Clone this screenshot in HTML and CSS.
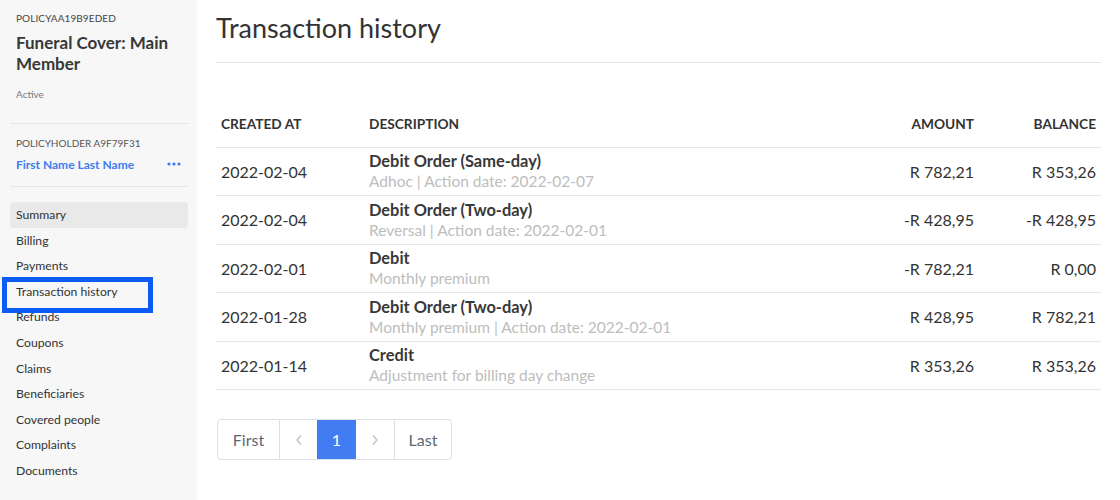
FILE: index.html
```html
<!DOCTYPE html>
<html>
<head>
<meta charset="utf-8">
<link rel="stylesheet" href="styles.css">
</head>
<body>
<div class="layout">
  <aside class="sidebar">
    <div class="policy-id">POLICYAA19B9EDED</div>
    <div class="policy-title">Funeral Cover: Main Member</div>
    <div class="policy-status">Active</div>
    <div class="divider first"></div>
    <div class="holder-label">POLICYHOLDER A9F79F31</div>
    <div class="holder-row">
      <span class="holder-name">First Name Last Name</span>
      <svg class="dots" width="14" height="4" viewBox="0 0 14 4"><circle cx="2" cy="2" r="1.6" fill="#3d7cf2"/><circle cx="7" cy="2" r="1.6" fill="#3d7cf2"/><circle cx="12" cy="2" r="1.6" fill="#3d7cf2"/></svg>
    </div>
    <div class="divider second"></div>
    <nav class="nav">
      <div class="nav-item selected">Summary</div>
      <div class="nav-item">Billing</div>
      <div class="nav-item">Payments</div>
      <div class="nav-item focused">Transaction history</div>
      <div class="nav-item">Refunds</div>
      <div class="nav-item">Coupons</div>
      <div class="nav-item">Claims</div>
      <div class="nav-item">Beneficiaries</div>
      <div class="nav-item">Covered people</div>
      <div class="nav-item">Complaints</div>
      <div class="nav-item">Documents</div>
    </nav>
  </aside>
  <main class="main">
    <h1 class="page-title">Transaction history</h1>
    <table class="tx-table">
      <thead>
        <tr>
          <th class="col-date">CREATED AT</th>
          <th class="col-desc">DESCRIPTION</th>
          <th class="col-amt num">AMOUNT</th>
          <th class="col-bal num">BALANCE</th>
        </tr>
      </thead>
      <tbody>
        <tr>
          <td>2022-02-04</td>
          <td><div class="d-title">Debit Order (Same-day)</div><div class="d-sub">Adhoc | Action date: 2022-02-07</div></td>
          <td class="num">R 782,21</td>
          <td class="num">R 353,26</td>
        </tr>
        <tr>
          <td>2022-02-04</td>
          <td><div class="d-title">Debit Order (Two-day)</div><div class="d-sub">Reversal | Action date: 2022-02-01</div></td>
          <td class="num">-R 428,95</td>
          <td class="num">-R 428,95</td>
        </tr>
        <tr>
          <td>2022-02-01</td>
          <td><div class="d-title">Debit</div><div class="d-sub">Monthly premium</div></td>
          <td class="num">-R 782,21</td>
          <td class="num">R 0,00</td>
        </tr>
        <tr>
          <td>2022-01-28</td>
          <td><div class="d-title">Debit Order (Two-day)</div><div class="d-sub">Monthly premium | Action date: 2022-02-01</div></td>
          <td class="num">R 428,95</td>
          <td class="num">R 782,21</td>
        </tr>
        <tr>
          <td>2022-01-14</td>
          <td><div class="d-title">Credit</div><div class="d-sub">Adjustment for billing day change</div></td>
          <td class="num">R 353,26</td>
          <td class="num">R 353,26</td>
        </tr>
      </tbody>
    </table>
    <div class="pager">
      <div class="pg pg-first">First</div>
      <div class="pg pg-arrow"><svg width="8" height="12" viewBox="0 0 8 12"><path d="M6 1.5 L2 6 L6 10.5" fill="none" stroke="#c4c7cc" stroke-width="1.6"/></svg></div>
      <div class="pg pg-active">1</div>
      <div class="pg pg-arrow"><svg width="8" height="12" viewBox="0 0 8 12"><path d="M2 1.5 L6 6 L2 10.5" fill="none" stroke="#c4c7cc" stroke-width="1.6"/></svg></div>
      <div class="pg pg-last">Last</div>
    </div>
  </main>
</div>
</body>
</html>
```
FILE: styles.css
```css
*, *::before, *::after { box-sizing: border-box; }
html, body { margin: 0; padding: 0; }
body {
  font-family: Lato, "Noto Sans", "Liberation Sans", sans-serif;
  color: #333;
  background: #fff;
}
.layout {
  display: flex;
  width: 1120px;
  height: 500px;
  overflow: hidden;
}
.sidebar {
  width: 197px;
  flex: none;
  background: #f7f7f7;
  padding: 10px 9px 0 10px;
}
.policy-id {
  font-size: 10px;
  line-height: 16px;
  color: #444;
  padding-left: 6px;
  letter-spacing: 0.1px;
}
.policy-title {
  margin-top: 6px;
  font-size: 17px;
  line-height: 21px;
  font-weight: 700;
  color: #383838;
  padding-left: 6px;
}
.policy-status {
  margin-top: 12px;
  font-size: 10px;
  line-height: 16px;
  color: #777;
  padding-left: 6px;
}
.divider {
  height: 1px;
  background: #e6e6e6;
}
.divider.first { margin-top: 21px; }
.holder-label {
  margin-top: 11px;
  font-size: 10px;
  line-height: 16px;
  color: #555;
  padding-left: 6px;
}
.holder-row {
  margin-top: 5px;
  display: flex;
  align-items: center;
  justify-content: space-between;
  padding-left: 6px;
  padding-right: 7px;
  height: 16px;
}
.holder-name {
  font-size: 12px;
  font-weight: 700;
  color: #3d7cf2;
}
.dots { display: block; }
.divider.second { margin-top: 14px; }
.nav { margin-top: 15px; }
.nav-item {
  height: 25.6px;
  line-height: 25.6px;
  font-size: 12.2px;
  color: #333;
  padding-left: 6px;
  border-radius: 4px;
}
.nav-item.selected { background: #e9e9e9; }
.nav-item.focused { position: relative; }
.nav-item.focused::before {
  content: "";
  position: absolute;
  left: -8px;
  top: -2px;
  width: 151px;
  height: 36px;
  border: 5px solid #0a5cf5;
  border-radius: 0;
}
.main {
  flex: 1;
  padding: 0 19px;
}
.page-title {
  margin: 0;
  padding-top: 11px;
  padding-bottom: 17px;
  font-size: 27px;
  line-height: 34px;
  font-weight: 400;
  color: #333;
  border-bottom: 1px solid #e3e3e3;
}
.tx-table {
  margin-top: 37px;
  width: 100%;
  border-collapse: collapse;
}
.tx-table th {
  height: 47px;
  padding: 0 5px;
  font-size: 13.7px;
  font-weight: 700;
  text-align: left;
  color: #333;
  border-bottom: 1px solid #e6e6e6;
  vertical-align: middle;
}
.tx-table td {
  padding: 3.6px 5px 4px;
  font-size: 16px;
  color: #333;
  border-bottom: 1px solid #e6e6e6;
  vertical-align: middle;
}
.col-date { width: 148px; }
.col-amt { width: 130px; }
.col-bal { width: 122px; }
.tx-table .num { text-align: right; }
.d-title {
  font-size: 16.4px;
  line-height: 20px;
  font-weight: 700;
  color: #383838;
}
.d-sub {
  font-size: 15.5px;
  line-height: 20px;
  color: #bdbdbd;
}
.pager {
  margin-top: 29px;
  margin-left: 1px;
  display: inline-flex;
  border: 1px solid #dcdfe3;
  border-radius: 4px;
  height: 41px;
  overflow: hidden;
}
.pg {
  display: flex;
  align-items: center;
  justify-content: center;
  font-size: 16px;
  color: #5f6670;
  border-left: 1px solid #dcdfe3;
}
.pg:first-child { border-left: none; }
.pg-first { width: 61px; }
.pg-arrow { width: 38px; }
.pg-active {
  width: 39px;
  background: #417cf3;
  color: #fff;
  border-left: none;
}
.pg-active + .pg { border-left: none; }
.pg-last { width: 57px; }
```
